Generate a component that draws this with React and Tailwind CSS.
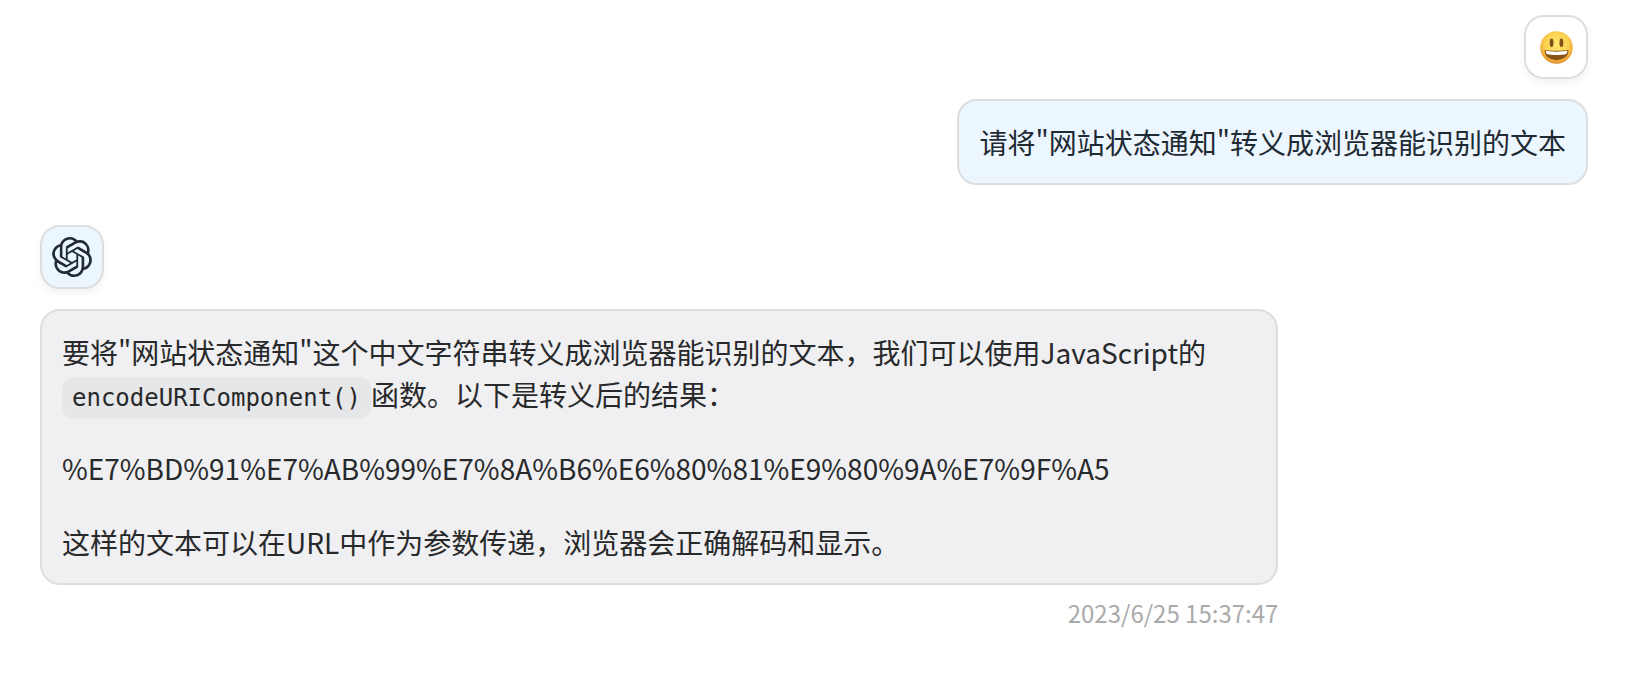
import React from 'react';
import clsx from 'clsx';
import { SiOpenai } from 'react-icons/si';

const messages = [
  {
    id: 1,
    role: 'user',
    content: <p>请将"网站状态通知"转义成浏览器能识别的文本</p>,
  },
  {
    id: 2,
    role: 'assistant',
    date: '2023/6/25 15:37:47',
    content: (
      <>
        <p>
          要将"网站状态通知"这个中文字符串转义成浏览器能识别的文本，我们可以使用JavaScript的
          <code className="whitespace-nowrap rounded-xl bg-[#e6e7e9] px-[10px] py-[7px] font-['DejaVu_Sans_Mono',monospace] text-2xl/6">
            encodeURIComponent()
          </code>
          函数。以下是转义后的结果：
        </p>
        <p>%E7%BD%91%E7%AB%99%E7%8A%B6%E6%80%81%E9%80%9A%E7%9F%A5</p>
        <p>这样的文本可以在URL中作为参数传递，浏览器会正确解码和显示。</p>
      </>
    ),
  },
];

function SmileyIcon() {
  return (
    <svg viewBox="0 0 64 64" className="h-[33px] w-[33px]" role="img" aria-label="smiley">
      <defs>
        <radialGradient id="face" cx="50%" cy="40%" r="62%">
          <stop offset="0%" stopColor="#ffe873" />
          <stop offset="60%" stopColor="#fbd04e" />
          <stop offset="84%" stopColor="#eeaa38" />
          <stop offset="100%" stopColor="#d27f2c" />
        </radialGradient>
      </defs>
      <circle cx="32" cy="32" r="31.500" fill="url(#face)" />
      <ellipse cx="22.500" cy="23" rx="3.700" ry="8.500" fill="#80501a" />
      <ellipse cx="41.500" cy="23" rx="3.700" ry="8.500" fill="#80501a" />
      <path d="M9 37c8 2 38 2 46 0c1 11-9 19.500-23 19.500s-24-8.500-23-19.500z" fill="#8a5316" />
      <path d="M11 38.500c8 2 34 2 42 0c0 3-1 5.500-3 6.500c-9 2-27 2-36 0c-2-1-3-3.500-3-6.500z" fill="#fff" />
    </svg>
  );
}

function Avatar({ isUser }) {
  return (
    <div
      className={clsx(
        'flex h-16 w-16 items-center justify-center rounded-[20px] border-2 border-[#dedede] shadow-[0_4px_8px_rgba(0,0,0,0.05)]',
        isUser ? 'bg-white' : 'bg-[#ebf6ff]'
      )}
    >
      {isUser ? <SmileyIcon /> : <SiOpenai className="h-10 w-10 text-[#222b33]" />}
    </div>
  );
}

function Message({ message }) {
  const isUser = message.role === 'user';

  return (
    <div className={clsx('flex', isUser ? 'justify-end' : 'justify-start')}>
      <div className={clsx('flex max-w-4/5 flex-col gap-5', isUser ? 'items-end' : 'items-start')}>
        <Avatar isUser={isUser} />
        <div>
          <div
            className={clsx(
              'flex flex-col gap-8 rounded-[20px] border-2 border-[#dedede] p-5 text-[28px]/[42px]',
              isUser ? 'bg-[#ebf6ff] text-[#1f2a33]' : 'bg-[#f0f0f2] text-[#28292b]'
            )}
          >
            {message.content}
          </div>
          {message.date && (
            <div className="pt-[10px] text-right text-2xl/9 text-[#a9aaab]">{message.date}</div>
          )}
        </div>
      </div>
    </div>
  );
}

export default function App() {
  return (
    <main
      lang="zh-CN"
      className="flex flex-col gap-10 bg-white px-10 pt-[15px] pb-10 font-['Noto_Sans_CJK_SC',sans-serif]"
    >
      {messages.map((message) => (
        <Message key={message.id} message={message} />
      ))}
    </main>
  );
}
